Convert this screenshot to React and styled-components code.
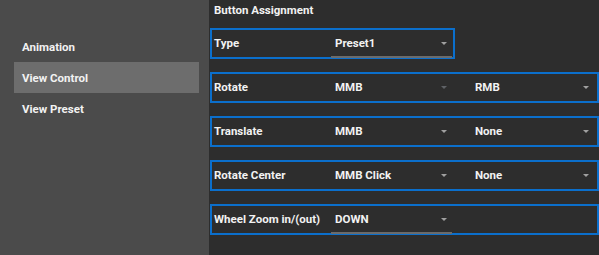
import React from "react";
import styled, { createGlobalStyle } from "styled-components";

const GlobalStyle = createGlobalStyle`
    html, body {
        margin: 0;
        padding: 0;
        background: #2d2d2d;
    }
    body {
        font-family: Roboto, "Liberation Sans", sans-serif;
    }
`;

const Layout = styled.div`
    display: flex;
    width: 599px;
    height: 255px;
    overflow: hidden;
`;

const Sidebar = styled.nav`
    width: 209px;
    flex-shrink: 0;
    background-color: #4b4b4b;
    padding-top: 31px;
    box-sizing: border-box;
`;

const NavItem = styled.div`
    margin: 0 10px 0 14px;
    height: 31px;
    display: flex;
    align-items: center;
    padding-left: 8px;
    font-size: 11.5px;
    font-weight: 700;
    color: #f2f2f2;
    background-color: ${(props) => (props.active ? "#6d6d6d" : "transparent")};
`;

const Panel = styled.section`
    flex: 1;
    background-color: #2d2d2d;
    border-right: 1px solid #4a4a4a;
    padding-left: 1px;
    box-sizing: border-box;
`;

const Header = styled.div`
    height: 28px;
    padding: 3px 0 0 4px;
    box-sizing: border-box;
    font-size: 11.5px;
    font-weight: 700;
    color: #f2f2f2;
`;

const Row = styled.div`
    display: grid;
    grid-template-columns: 119px 121px 1fr;
    align-items: stretch;
    width: ${(props) => (props.narrow ? "245px" : "389px")};
    height: 31px;
    margin-bottom: 13px;
    border: 2px solid #0b6fcc;
    box-sizing: border-box;
`;

const Label = styled.div`
    display: flex;
    align-items: center;
    padding: 0 0 1px 2px;
    font-size: 11.5px;
    font-weight: 700;
    color: #f2f2f2;
    white-space: nowrap;
`;

const Select = styled.div`
    display: flex;
    align-items: center;
    justify-content: space-between;
    padding: 0 4px 1px;
    margin-left: ${(props) => (props.second ? "19px" : "0")};
    margin-right: ${(props) => (props.second ? "3px" : "0")};
    font-size: 11.5px;
    font-weight: 700;
    color: #f2f2f2;
    border-bottom: ${(props) => (props.underline ? "2px solid #6b6b6b" : "none")};
    margin-bottom: ${(props) => (props.underline ? "-1px" : "0")};
    box-sizing: border-box;
`;

const Arrow = styled.span`
    width: 0;
    height: 0;
    border-left: 3.5px solid transparent;
    border-right: 3.5px solid transparent;
    border-top: 3.5px solid ${(props) => (props.dim ? "#5f6266" : "#a0a0a0")};
    margin: 1px 1px 0 0;
`;

const rows = [
    { label: "Type", values: ["Preset1"], narrow: true, underline: true },
    { label: "Rotate", values: ["MMB", "RMB"], dim: true },
    { label: "Translate", values: ["MMB", "None"] },
    { label: "Rotate Center", values: ["MMB Click", "None"] },
    { label: "Wheel Zoom in/(out)", values: ["DOWN"], underline: true },
];

const App = () => {
    return (
        <>
            <GlobalStyle />
            <Layout>
                <Sidebar>
                    <NavItem>Animation</NavItem>
                    <NavItem active>View Control</NavItem>
                    <NavItem>View Preset</NavItem>
                </Sidebar>
                <Panel>
                    <Header>Button Assignment</Header>
                    {rows.map((row) => (
                        <Row key={row.label} narrow={row.narrow}>
                            <Label>{row.label}</Label>
                            {row.values.map((value, i) => (
                                <Select key={i} second={i === 1} underline={row.underline}>
                                    {value}
                                    <Arrow dim={row.dim && i === 0} />
                                </Select>
                            ))}
                        </Row>
                    ))}
                </Panel>
            </Layout>
        </>
    );
};

export default App;
